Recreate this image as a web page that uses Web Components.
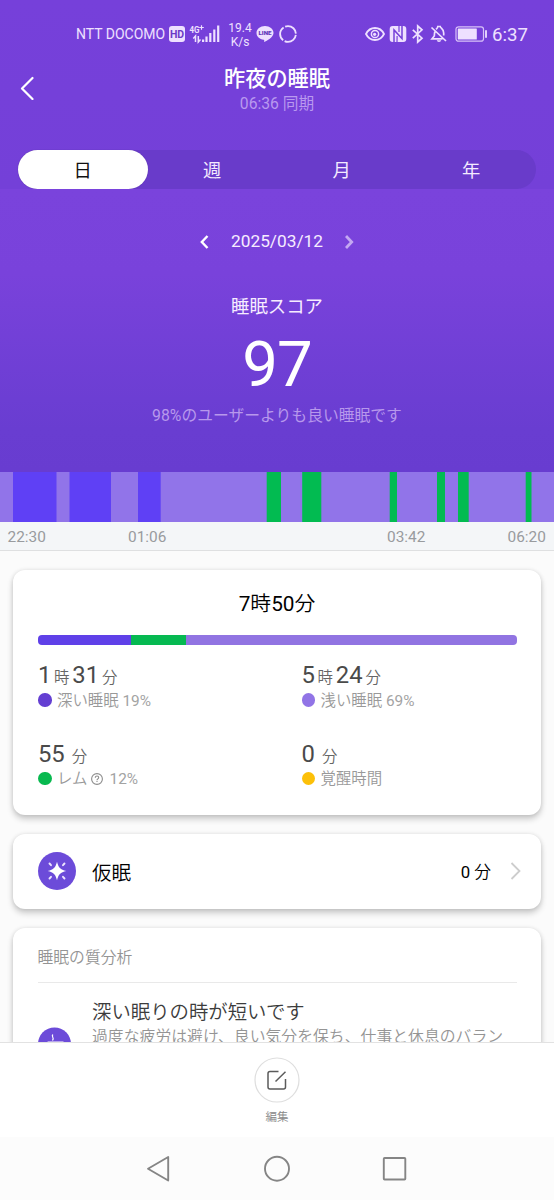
<!DOCTYPE html>
<html lang="ja">
<head>
<meta charset="utf-8">
<title>昨夜の睡眠</title>
<style>
html,body{margin:0;padding:0}
body{width:554px;height:1200px;overflow:hidden;background:#fbfbfb;font-family:Roboto,"Noto Sans CJK JP",sans-serif}
</style>
</head>
<body>
<sleep-app></sleep-app>
<script>
function define(name, html) {
  const tpl = document.createElement('template');
  tpl.innerHTML = html;
  customElements.define(name, class extends HTMLElement {
    constructor() {
      super();
      this.attachShadow({ mode: 'open' }).appendChild(tpl.content.cloneNode(true));
    }
  });
}

define('status-bar', `
<style>
:host{display:flex;height:68px;align-items:flex-start;color:#eee0ff;box-sizing:border-box;padding-left:76px;white-space:nowrap}
svg{display:block;flex:none;overflow:visible}
.carrier{font-size:14px;line-height:20px;width:93px;margin-top:24px}
.hd{width:16px;height:16px;margin-top:26px;background:#eee0ff;border-radius:3px;color:#6b3ac6;font-weight:700;font-size:10.5px;line-height:17.500px;text-align:center}
.sig{margin:25px 0 0 4px}
.rate{font-size:12px;line-height:14px;width:26px;margin:21px 0 0 6px;text-align:center}
.time{font-size:18.6px;line-height:22px;margin:24px 0 0 4px}
</style>
<span class="carrier">NTT DOCOMO</span>
<span class="hd">HD</span>
<svg class="sig" width="32" height="18" viewBox="0 0 32 18" fill="currentColor">
<text x="0.5" y="7.5" font-size="9.500" font-weight="700" textLength="10" lengthAdjust="spacingAndGlyphs">4G</text>
<path d="M12.500 .2v4.600M10.200 2.500h4.600" stroke="currentColor" stroke-width="1.200"/>
<path d="M6.500 17v-6l-2.200 2.400M9.300 11v6l2.200-2.400" fill="none" stroke="currentColor" stroke-width="1.500"/>
<path d="M13 14.500h2.200V17H13zM16.400 11.500h2.200V17h-2.200zM20.200 8h2.200v9h-2.200zM24.200 4.500h2.200V17h-2.200zM28.100 .5h2.200V17h-2.200z"/>
</svg>
<span class="rate">19.4<br>K/s</span>
<svg width="18" height="18" viewBox="0 0 18 18" style="margin:25px 0 0 3px"><path d="M9 1C4.300 1 .5 4.100 .5 8c0 3.400 3 6.200 7.200 6.800.8.2.5 1 .4 2.200 2.700-1.200 9.400-4.700 9.400-9C17.500 4.100 13.700 1 9 1z" fill="#eee0ff"/><text x="9" y="10.3" font-size="6" font-weight="900" fill="#6034b8" text-anchor="middle" textLength="13" lengthAdjust="spacingAndGlyphs">LINE</text></svg>
<svg width="18" height="18" viewBox="0 0 18 18" style="margin:25px 0 0 5px"><circle cx="9" cy="9" r="7.900" fill="none" stroke="#eee0ff" stroke-width="1.800" stroke-dasharray="14.800 1.740" stroke-dashoffset="-1"/></svg>
<svg width="20" height="16" viewBox="0 0 20 16" fill="none" stroke="#eee0ff" style="margin:26px 0 0 68px"><path d="M1 8C3 4 6.500 2 10 2s7 2 9 6c-2 4-5.500 6-9 6S3 12 1 8z" stroke-width="1.800"/><circle cx="10" cy="8" r="3.600" stroke-width="1.500"/><circle cx="9.600" cy="8.300" r="1.600" fill="#eee0ff" stroke="none"/></svg>
<svg width="18" height="18" viewBox="0 0 18 18" style="margin:25px 0 0 4px"><rect x=".7" y="1" width="16.600" height="16" rx="3" fill="#eee0ff"/><path d="M5 17.500V5l8 8.500V.5" fill="none" stroke="#7640d9" stroke-width="1.500"/><path d="M8 17.500l.1-6.500M10 .5v6.500" fill="none" stroke="#7640d9" stroke-width="1.200"/></svg>
<svg width="12" height="18" viewBox="0 0 12 18" fill="none" stroke="#eee0ff" stroke-width="1.700" style="margin:25px 0 0 5px"><path d="M.8 4.800l9.200 8.400L5.700 17V1L10 4.800.8 13.200"/></svg>
<svg width="18" height="18" viewBox="0 0 18 18" fill="none" stroke="#eee0ff" stroke-width="1.700" style="margin:25px 0 0 6px"><path d="M1.500 2.500l14.500 13.500M5 6.200C4.400 7.500 4.500 9 4.300 11L2 13.800h10.500M6 4.300c1-.9 1.700-1.100 1.800-2.800h2.400c.2 1.800 3.500 2 3.500 6.500v2.500"/><path d="M6.800 15.300h4.400c-.3 2.200-4.100 2.200-4.400 0z" fill="#eee0ff" stroke="none"/></svg>
<svg width="33" height="16" viewBox="0 0 33 16" style="margin:26px 0 0 7px"><rect x="1" y=".8" width="27.500" height="14.400" rx="2.500" fill="none" stroke="#d8c2f8" stroke-width="1.200"/><rect x="2.800" y="2.600" width="19" height="10.800" rx=".5" fill="#eee0ff"/><path d="M31 4.200v7.600" stroke="#eee0ff" stroke-width="1.800"/></svg>
<span class="time">6:37</span>`);

define('page-header', `
<style>
:host{display:grid;grid-template-columns:80px 1fr 80px;height:82px;color:#fff;text-align:center}
svg{margin:8px 0 0 19px}
h1{font-size:21.2px;line-height:24px;font-weight:500;margin:-1px 0 0}
p{font-size:15.700px;line-height:20px;margin:2.500px 0 0;color:#b999ef}
</style>
<svg width="18" height="24" viewBox="0 0 18 24" fill="none" stroke="#fff" stroke-width="2.200" stroke-linecap="round" stroke-linejoin="round"><path d="M13.500 2L3 12.500 13.500 23"/></svg>
<div><h1><slot name="title"></slot></h1><p><slot name="sub"></slot></p></div>`);

define('period-tabs', `
<style>
:host{display:flex;height:39px;margin:0 18px;border-radius:20px;background:#693bca;color:#f4eaff;font-size:18.3px;line-height:41px;text-align:center}
::slotted(span){flex:1}
::slotted(.on){background:#fff;color:#111;border-radius:20px;box-shadow:0 0 1px #4d2a99}
</style><slot></slot>`);

define('score-hero', `
<style>
:host{display:flex;flex-direction:column;align-items:center;height:283px;color:#f6ecff;background:linear-gradient(#7a43dc 0,#7942db 30%,#693dd1 85%,#683cd0)}
.date{display:flex;align-items:center;justify-content:space-between;width:154px;height:24px;margin:41px 0 0 0;font-size:17.300px;line-height:22px}
.date ::slotted(span){margin-top:-2px}
.label{font-size:18.400px;line-height:24px;margin-top:41px}
.score{font-size:63.500px;line-height:70px;margin-top:11px;color:#fff;letter-spacing:-1px}
.note{font-size:15.800px;line-height:24px;margin-top:4px;color:#b798ec}
</style>
<div class="date">
<svg width="9" height="14" viewBox="0 0 9 14" fill="none" stroke="#fff" stroke-width="2.400"><path d="M7.500 1L1.800 7l5.700 6"/></svg>
<slot name="date"></slot>
<svg width="9" height="14" viewBox="0 0 9 14" fill="none" stroke="#c4a8f2" stroke-width="2.800"><path d="M1 1l5.700 6L1 13"/></svg></div>
<div class="label"><slot name="label"></slot></div>
<div class="score"><slot name="score"></slot></div>
<div class="note"><slot name="note"></slot></div>`);

customElements.define('sleep-timeline', class extends HTMLElement {
  constructor() {
    super();
    const root = this.attachShadow({ mode: 'open' });
    const D = '#5f40f5', R = '#02bb51';
    const bars = [[13,56.5,D],[69.500,111,D],[138,160.700,D],[266.700,281,R],[302.200,321.300,R],[389.700,397,R],[437,445,R],[458,468.700,R],[525.700,531.500,R]];
    root.innerHTML = `<style>
:host{display:block;height:79px;box-sizing:border-box;background:#f4f6f8;border-bottom:1px solid #dfe0e1}
svg{display:block;background:#9174e9}
.t{display:grid;grid-template-columns:120.500px 259px 120.500px auto;padding-left:7.500px;font-size:15.400px;line-height:20px;padding-top:4.500px;color:#999b9e}
</style><svg width="554" height="50">${bars.map(([a,b,c]) => `<rect x="${a}" width="${b-a}" height="50" fill="${c}"/>`).join('')}</svg>
<div class="t"><span>22:30</span><span>01:06</span><span>03:42</span><span>06:20</span></div>`;
  }
});

define('app-card', `
<style>:host{display:block;margin:0 13px;border-radius:12px;background:#fff;box-sizing:border-box;box-shadow:0 4px 6px rgba(0,0,0,.2),0 0 4px rgba(0,0,0,.1)}</style><slot></slot>`);

define('sleep-stat', `
<style>
:host{display:block;height:78.500px;color:#4a4a4a;white-space:nowrap}
.v{display:flex;font-size:23.800px;line-height:28px;height:28px;align-items:baseline}
.l{display:flex;align-items:center;height:22px;font-size:15.400px;line-height:22px;color:#999;font-weight:350}
.l ::slotted(*){line-height:22px}
i{width:13.500px;height:13.500px;border-radius:50%;background:var(--dot);margin-right:5.500px;flex:none}
::slotted(small){font-size:15.400px;font-weight:350;color:#666}
.l ::slotted(.t){margin-top:1px;white-space:pre}
.l ::slotted(.p){font-weight:400;color:#a3a3a3}
</style>
<div class="v"><slot name="value"></slot></div><div class="l"><i></i><slot></slot></div>`);

define('help-mark', `
<style>:host{display:block;margin:0 6px 0 4px}svg{display:block}</style>
<svg width="12" height="12" viewBox="0 0 12 12" fill="none" stroke="#8d8d8d" stroke-width="1.100"><circle cx="6" cy="6" r="5.400"/><path d="M4.300 4.700c0-2.300 3.400-2.200 3.400-.1C7.700 5.900 6 5.800 6 7.200M6 8v1.100"/></svg>`);

define('sleep-summary', `
<style>
:host{display:block;height:245px;padding:20px 25px 0;box-sizing:border-box}
h2{margin:0;text-align:center;font-size:20.800px;line-height:28px;font-weight:350;color:#000}
h2 span{font-weight:400}
.bar{display:flex;height:9.500px;width:478.500px;margin-top:17px;border-radius:4px;overflow:hidden}
.bar b{display:block}
.grid{display:grid;grid-template-columns:263.500px 1fr;margin-top:16.500px}
</style>
<h2><span>7</span>時<span>50</span>分</h2>
<div class="bar"><b style="width:92.500px;background:#5f40e8"></b><b style="width:55.500px;background:#06b951"></b><b style="flex:1;background:#9174e2"></b></div>
<div class="grid">
<sleep-stat style="--dot:#643fd2"><span slot="value">1</span><small slot="value" style="margin:0 3px 0 2.500px">時</small><span slot="value">31</span><small slot="value" style="margin-left:3px">分</small><span class="t">深い睡眠</span><span class="t p"> 19%</span></sleep-stat>
<sleep-stat style="--dot:#9174e6"><span slot="value">5</span><small slot="value" style="margin:0 3px 0 2.500px">時</small><span slot="value">24</span><small slot="value" style="margin-left:3px">分</small><span class="t">浅い睡眠</span><span class="t p"> 69%</span></sleep-stat>
<sleep-stat style="--dot:#08b94f"><span slot="value">55</span><small slot="value" style="margin-left:7px">分</small><span class="t">レム</span><help-mark></help-mark><span class="t p">12%</span></sleep-stat>
<sleep-stat style="--dot:#fcc009"><span slot="value">0</span><small slot="value" style="margin-left:7px">分</small><span class="t">覚醒時間</span></sleep-stat>
</div>`);

define('nap-row', `
<style>
:host{display:flex;align-items:center;height:75.500px;padding:0 19px 0 25px;color:#000;font-size:19.500px;font-weight:350;box-sizing:border-box}
svg{flex:none}.n{margin-left:16px;flex:1}.v{font-size:16.800px;margin:-1px 19px 0 0}.v span{font-weight:400}
</style>
<svg width="38" height="38" viewBox="0 0 38 38"><circle cx="19" cy="19" r="19" fill="#6c4bd9"/><path d="M19 9.700c1.500 6 3.300 7.800 9.300 9.300-6 1.500-7.800 3.300-9.300 9.300-1.500-6-3.300-7.800-9.300-9.300 6-1.500 7.800-3.300 9.300-9.300z" fill="#fff"/><path d="M11.500 11.500l1.500 1.700M26.500 11.500L25 13.200M11.500 26.500l1.500-1.700M26.500 26.500L25 24.800" stroke="#eee6ff" stroke-width="1.900" stroke-linecap="round"/></svg>
<span class="n">仮眠</span><span class="v"><span>0</span> 分</span>
<svg width="12" height="18" viewBox="0 0 12 18" fill="none" stroke="#cdcdcd" stroke-width="1.800"><path d="M1.500 1l8 8-8 8"/></svg>`);

define('quality-analysis', `
<style>
:host{display:block;height:150px;padding:0 24.500px;color:#949494;font-weight:350}
.h{height:54px;line-height:60px;font-size:15.800px;border-bottom:1.500px solid #e9e9e9}
.r{display:grid;grid-template-columns:54.500px 1fr;padding-top:17px}
svg{margin-top:27.500px}
h3{font-size:19.400px;line-height:26px;font-weight:350;color:#3c3c3c;margin:0}
p{margin:3px 0 0;font-size:15.850px;line-height:16px;white-space:nowrap}
</style>
<div class="h">睡眠の質分析</div>
<div class="r"><svg width="34" height="34" viewBox="0 0 34 34"><circle cx="16.500" cy="17" r="16.500" fill="#6c4bd9"/><path d="M15 7.500c-2.500 2 2 3-.5 6" fill="none" stroke="#fff" stroke-width="1.200"/><path d="M9.500 14.500h16v6.500a7 7 0 0 1-14 0z" fill="#fff"/></svg>
<div><h3>深い眠りの時が短いです</h3><p>過度な疲労は避け、良い気分を保ち、仕事と休息のバラン</p></div></div>`);

define('edit-bar', `
<style>
:host{display:flex;flex-direction:column;align-items:center;height:95px;box-sizing:border-box;border-top:1.500px solid #e2e2e2;background:#fff;padding-top:14px;color:#888;font-size:11.500px;line-height:16px;font-weight:350}
svg{display:block;margin-bottom:5.500px}
</style>
<svg width="46" height="46" viewBox="0 0 46 46" fill="none" stroke="#5b5b5b" stroke-width="1.500"><circle cx="23" cy="23" r="22" stroke="#dedede" stroke-width="1.200"/><path d="M24.500 14.500H16a2 2 0 0 0-2 2V30a2 2 0 0 0 2 2h13.500a2 2 0 0 0 2-2v-8M21.500 24.500l10-9.700"/></svg>
<slot></slot>`);

define('system-nav', `
<style>
:host{display:flex;height:63px;background:#fcfcfc}
svg{display:block}
</style>
<svg width="554" height="63" fill="none" stroke="#858585" stroke-width="1.900" stroke-linejoin="round"><path d="M168.200 20v23.500L148 31.700z"/><circle cx="277" cy="31.700" r="12"/><rect x="383.800" y="21" width="21.500" height="21.500" rx=".8"/></svg>`);

define('sleep-app', `
<style>
:host{display:flex;flex-direction:column;width:554px;height:1200px;overflow:hidden}
.top{background:linear-gradient(#7640da,#7440d8);height:189px;flex:none}
score-hero,sleep-timeline,edit-bar,system-nav{flex:none}
.feed{flex:1;min-height:0;overflow:hidden;display:flex;flex-direction:column;gap:18.500px;padding-top:19px;background:#fbfbfb}
app-card{flex:none}
</style>
<div class="top"><status-bar></status-bar>
<page-header><span slot="title">昨夜の睡眠</span><span slot="sub">06:36 同期</span></page-header>
<period-tabs><span class="on">日</span><span>週</span><span>月</span><span>年</span></period-tabs></div>
<score-hero><span slot="date">2025/03/12</span><span slot="label">睡眠スコア</span><span slot="score">97</span><span slot="note">98%のユーザーよりも良い睡眠です</span></score-hero>
<sleep-timeline></sleep-timeline>
<div class="feed">
<app-card><sleep-summary></sleep-summary></app-card>
<app-card><nap-row></nap-row></app-card>
<app-card><quality-analysis></quality-analysis></app-card>
</div>
<edit-bar>編集</edit-bar>
<system-nav></system-nav>`);
</script>
</body>
</html>
